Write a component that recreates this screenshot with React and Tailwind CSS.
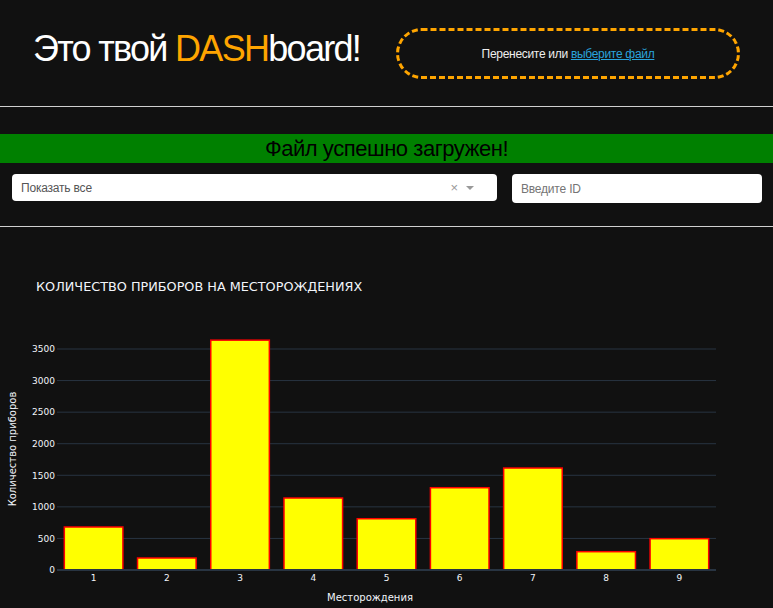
import React from "react";

const values = [681, 190, 3640, 1140, 812, 1303, 1615, 290, 496];
const TOP = 227; // svg page offset
const X0 = 57;
const X1 = 716;
const Y0 = 570 - TOP;
const PER = (570 - 349) / 3500;

function Chart() {
  const step = (X1 - X0) / 9;
  const bw = step * 0.8;
  const ticks = [0, 500, 1000, 1500, 2000, 2500, 3000, 3500];
  const font = "'DejaVu Sans', Verdana, sans-serif";
  return (
    <svg width="773" height="381" className="block" style={{ fontFamily: font }}>
      <text x="36" y={290.5 - TOP} fontSize="12.8" fill="#f2f5fa">
        КОЛИЧЕСТВО ПРИБОРОВ НА МЕСТОРОЖДЕНИЯХ
      </text>
      {ticks.map((t) => {
        const y = Y0 - t * PER;
        return (
          <g key={t}>
            {t !== 0 && (
              <line x1={X0} x2={X1} y1={y} y2={y} stroke="#283442" strokeWidth="1" />
            )}
            <text x="55" y={y + 3.3} fontSize="9" textAnchor="end" fill="#f2f5fa">
              {t}
            </text>
          </g>
        );
      })}
      {values.map((v, i) => {
        const cx = X0 + step * (i + 0.5);
        const h = v * PER;
        return (
          <g key={i}>
            <rect
              x={cx - bw / 2}
              y={Y0 - h}
              width={bw}
              height={h}
              fill="#ffff00"
              stroke="#ff0000"
              strokeWidth="1.5"
            />
            <text x={cx} y={580.5 - TOP} fontSize="9" textAnchor="middle" fill="#f2f5fa">
              {i + 1}
            </text>
          </g>
        );
      })}
      <line x1={X0} x2={X1} y1={Y0} y2={Y0} stroke="#283442" strokeWidth="2" />
      <text x="370" y={601 - TOP} fontSize="10" textAnchor="middle" fill="#f2f5fa">
        Месторождения
      </text>
      <text
        transform={`translate(15.5 ${449 - TOP}) rotate(-90)`}
        fontSize="10"
        textAnchor="middle"
        fill="#f2f5fa"
      >
        Количество приборов
      </text>
    </svg>
  );
}

export default function App() {
  return (
    <div
      className="w-[773px] h-[608px] overflow-hidden bg-[#111111]"
      style={{ fontFamily: "'Liberation Sans', Arial, sans-serif" }}
    >
      <div className="h-[106px] flex items-start pt-[28px]">
        <div className="w-[396px] pl-[33px]">
          <h1 className="text-[36px] leading-[41px] tracking-[-1.7px] text-white whitespace-nowrap">
            Это твой <span className="text-[#ffa500]">DASH</span>board!
          </h1>
        </div>
        <div className="w-[344px] h-[51px] rounded-[26px] border-[3px] border-dashed border-[#ffa500] flex items-center justify-center text-[12px] tracking-[-0.3px] text-[#eeeeee]">
          Перенесите или&nbsp;
          <span className="text-[#2aa3dc] underline">выберите файл</span>
        </div>
      </div>
      <div className="h-px bg-[#d0d0d0]" />
      <div className="mt-[27px] h-[29px] bg-[#008000] flex items-center justify-center text-[22px] leading-[29px] tracking-[-0.45px] text-black">
        Файл успешно загружен!
      </div>
      <div className="mt-[11px] flex items-start pl-[12px] gap-[15px]">
        <div className="w-[485px] h-[27px] bg-white rounded-[4px] flex items-center pl-[9px] pr-[23px] text-[12px] tracking-[-0.2px]">
          <span className="flex-1 text-[#555555]">Показать все</span>
          <span className="text-[#999999] text-[13px] leading-none mr-[8px]">×</span>
          <span className="w-0 h-0 border-l-[4px] border-r-[4px] border-t-[4px] border-l-transparent border-r-transparent border-t-[#999999]" />
        </div>
        <div className="w-[250px] h-[29px] bg-white rounded-[4px] flex items-center pl-[9px] text-[12px] tracking-[-0.2px] text-[#757575]">
          Введите ID
        </div>
      </div>
      <div className="mt-[23px] h-px bg-[#d0d0d0]" />
      <Chart />
    </div>
  );
}
